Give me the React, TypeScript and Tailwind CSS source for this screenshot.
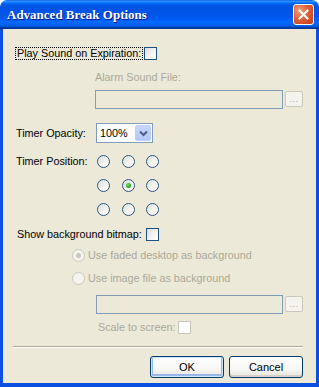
import React from 'react';

const sans = { fontFamily: '"Liberation Sans", Arial, sans-serif' };

function Check({ disabled = false }: { disabled?: boolean }) {
  return (
    <span
      className={
        'inline-block w-[13px] h-[13px] border shrink-0 ' +
        (disabled
          ? 'border-[#cac8bb] bg-white'
          : 'border-[#1c5180] bg-[linear-gradient(135deg,#dcdcd7_0%,#f4f4f0_55%,#ffffff_100%)]')
      }
    />
  );
}

function Radio({ checked = false, disabled = false }: { checked?: boolean; disabled?: boolean }) {
  return (
    <span
      className={
        'relative inline-flex items-center justify-center w-[13px] h-[13px] rounded-full border shrink-0 ' +
        (disabled
          ? 'border-[#cac8bb] bg-[#f4f3ee]'
          : 'border-[#2f5580] bg-[linear-gradient(135deg,#dcdcd7_0%,#f3f3ef_55%,#ffffff_100%)]')
      }
    >
      {checked && (
        <span
          className={
            'w-[5px] h-[5px] rounded-full ' +
            (disabled ? 'bg-[#cac8bb]' : 'bg-[radial-gradient(circle_at_40%_40%,#7de07d_0%,#21a121_60%,#1a8a1a_100%)]')
          }
        />
      )}
    </span>
  );
}

function DotsButton() {
  return (
    <span className="w-[18px] h-[16px] rounded-[2px] border border-[#cac8bb] bg-[#f4f3ee] flex items-end justify-center pb-[2px] text-[9px] leading-none text-[#aca899] tracking-[0.5px] mt-[1px]">
      ...
    </span>
  );
}

function XpButton({ label, isDefault = false }: { label: string; isDefault?: boolean }) {
  return (
    <button
      className={
        'w-[74px] h-[22px] rounded-[3px] border border-[#003c74] text-[11px] text-black flex items-center justify-center bg-[linear-gradient(to_bottom,#ffffff_0%,#f7f7f4_60%,#e3e2da_100%)] ' +
        (isDefault ? 'shadow-[inset_0_0_0_1px_#cee7ff,inset_0_-1px_0_2px_#98b8ea]' : 'shadow-[inset_0_-2px_0_0_#d6d0c5]')
      }
    >
      {label}
    </button>
  );
}

export default function App() {
  return (
    <div className="w-[319px] h-[387px] flex flex-col select-none" style={sans}>
      {/* title bar */}
      <div className="h-[29px] shrink-0 rounded-t-[7px] flex items-center pl-[7px] pr-[5px] bg-[linear-gradient(to_bottom,#0058ee_0%,#3593ff_4%,#288eff_6%,#127dff_8%,#036ffc_10%,#0262ee_14%,#0057e5_20%,#0054e3_24%,#0055eb_56%,#005bf5_66%,#026afe_76%,#0062ef_86%,#0052d6_92%,#0040ab_94%,#003092_100%)]">
        <span
          className="flex-1 text-white font-bold text-[13px] [text-shadow:1px_1px_#0a1883] pt-[1px]"
          style={{ fontFamily: '"Liberation Serif", "Times New Roman", serif' }}
        >
          Advanced Break Options
        </span>
        <span className="w-[21px] h-[21px] rounded-[3px] border border-white flex items-center justify-center bg-[radial-gradient(circle_at_30%_30%,#f0a080_0%,#e0603a_45%,#c13b18_100%)]">
          <svg width="11" height="11" viewBox="0 0 11 11">
            <path d="M1.5 1.5 L9.5 9.5 M9.5 1.5 L1.5 9.5" stroke="white" strokeWidth="2" strokeLinecap="square" />
          </svg>
        </span>
      </div>

      {/* body */}
      <div className="flex-1 flex flex-col bg-[#ece9d8] border-x-[3px] border-b-[4px] border-[#0a4fe0] text-[10.8px] leading-none text-black">
        {/* play sound */}
        <div className="mt-[18px] h-[13px] flex items-center pl-[12px]">
          <span className="border border-dotted border-black h-[13px] flex items-center px-[1px] mr-[1px]">
            Play Sound on Expiration:
          </span>
          <Check />
        </div>

        <div className="mt-[11px] h-[12px] flex items-center pl-[92px] text-[#aca899]">Alarm Sound File:</div>

        <div className="mt-[7px] h-[19px] flex items-start pl-[92px] gap-[2px]">
          <span className="w-[188px] h-[19px] border border-[#7f9db9] bg-[#ece9d8]" />
          <DotsButton />
        </div>

        {/* opacity */}
        <div className="mt-[14px] h-[20px] flex items-center pl-[13px]">
          <span className="w-[80px]">Timer Opacity:</span>
          <span className="w-[57px] h-[20px] border border-[#7f9db9] bg-white flex items-center pl-[3px] pr-[1px]">
            <span className="flex-1">100%</span>
            <span className="w-[16px] h-[16px] rounded-[2px] flex items-center justify-center bg-[linear-gradient(to_bottom,#c6d6fc_0%,#b2c8f8_100%)] border border-[#bcd0fb]">
              <svg width="9" height="7" viewBox="0 0 9 7">
                <path d="M1 1.5 L4.5 5 L8 1.5" stroke="#4d6185" strokeWidth="2" fill="none" />
              </svg>
            </span>
          </span>
        </div>

        {/* position */}
        <div className="mt-[12px] flex pl-[13px]">
          <span className="w-[81px] h-[13px] flex items-center">Timer Position:</span>
          <div className="grid grid-cols-[13px_13px_13px] gap-x-[11.5px] gap-y-[11px]">
            <Radio />
            <Radio />
            <Radio />
            <Radio />
            <Radio checked />
            <Radio />
            <Radio />
            <Radio />
            <Radio />
          </div>
        </div>

        {/* background bitmap */}
        <div className="mt-[12px] h-[13px] flex items-center pl-[14px] gap-[4px]">
          <span>Show background bitmap:</span>
          <Check />
        </div>

        <div className="mt-[8px] h-[13px] flex items-center pl-[69px] gap-[3px] text-[#aca899]">
          <Radio checked disabled />
          <span>Use faded desktop as background</span>
        </div>

        <div className="mt-[10px] h-[13px] flex items-center pl-[69px] gap-[3px] text-[#aca899]">
          <Radio disabled />
          <span>Use image file as background</span>
        </div>

        <div className="mt-[10px] h-[19px] flex items-start pl-[93px] gap-[2px]">
          <span className="w-[187px] h-[19px] border border-[#7f9db9] bg-[#ece9d8]" />
          <DotsButton />
        </div>

        <div className="mt-[7px] h-[13px] flex items-center pl-[95px] text-[#aca899]">
          <span className="w-[80px]">Scale to screen:</span>
          <Check disabled />
        </div>

        {/* separator */}
        <div className="mt-[12px] ml-[10px] w-[290px] border-t border-[#aca899] border-b border-b-white" />

        {/* buttons */}
        <div className="mt-[8px] flex pl-[147px] gap-[5px]">
          <XpButton label="OK" isDefault />
          <XpButton label="Cancel" />
        </div>
      </div>
    </div>
  );
}
